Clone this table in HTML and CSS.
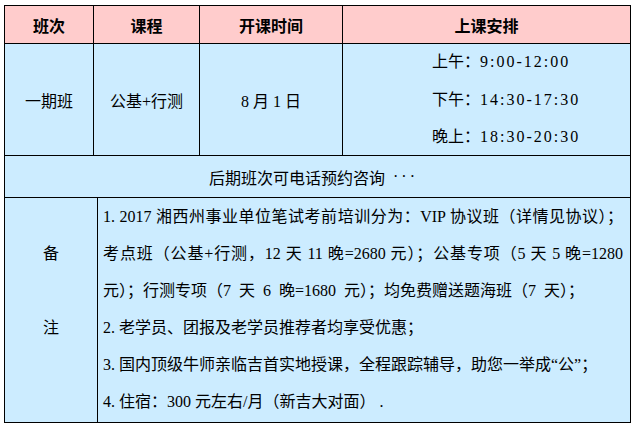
FILE: index.html
```html
<!DOCTYPE html>
<html lang="zh-CN">
<head>
<meta charset="utf-8">
<title>班次安排</title>
<link rel="stylesheet" href="styles.css">
</head>
<body>
<div class="sheet">
  <div class="grid4 head">
    <div class="cell c1">班次</div>
    <div class="cell c2">课程</div>
    <div class="cell c3">开课时间</div>
    <div class="cell c4">上课安排</div>
  </div>
  <div class="grid4 body-row">
    <div class="cell c1">一期班</div>
    <div class="cell c2">公基+行测</div>
    <div class="cell c3">8 月 1 日</div>
    <div class="cell c4 sched">
      <div>上午：<span class="time">9:00-12:00</span></div>
      <div>下午：<span class="time">14:30-17:30</span></div>
      <div>晚上：<span class="time">18:30-20:30</span></div>
    </div>
  </div>
  <div class="notice">后期班次可电话预约咨询<span class="dots">···</span></div>
  <div class="remarks">
    <div class="rcell rlabel">
      <div>&nbsp;</div>
      <div>备</div>
      <div>&nbsp;</div>
      <div>注</div>
    </div>
    <div class="rcell rtext">
      <div class="just">1. 2017 湘西州事业单位笔试考前培训分为：VIP 协议班（详情见协议）；</div>
      <div class="just">考点班（公基+行测，12 天 11 晚=2680 元）；公基专项（5 天 5 晚=1280</div>
      <div class="wide">元）；行测专项（7 天 6 晚=1680 元）；均免费赠送题海班（7 天）；</div>
      <div>2. 老学员、团报及老学员推荐者均享受优惠；</div>
      <div>3. 国内顶级牛师亲临吉首实地授课，全程跟踪辅导，助您一举成“公”；</div>
      <div>4. 住宿：300 元左右/月（新吉大对面）<span class="stop">.</span></div>
    </div>
  </div>
</div>
</body>
</html>
```
FILE: styles.css
```css
html, body {
  margin: 0;
  padding: 0;
  background: #ffffff;
}
body {
  padding: 5px 0 0 4px;
  font-family: "Liberation Serif", "Noto Sans CJK SC", serif;
  font-size: 16px;
  color: #000;
}
.sheet {
  width: 627px;
  box-sizing: border-box;
  border-left: 1px solid #000;
  border-top: 1px solid #000;
}
.grid4 {
  display: grid;
  grid-template-columns: 89px 106px 143px 288px;
}
.cell {
  box-sizing: border-box;
  border-right: 1px solid #000;
  border-bottom: 1px solid #000;
  display: flex;
  align-items: center;
  justify-content: center;
}
.head .cell {
  height: 38px;
  background: #ffcccc;
  font-weight: bold;
}
.body-row .cell {
  height: 112px;
  background: #ccecff;
}
.body-row .sched {
  flex-direction: column;
  align-items: flex-start;
  justify-content: center;
  padding-left: 89px;
  line-height: 37.5px;
}
.time {
  letter-spacing: 2px;
}
.notice {
  box-sizing: border-box;
  height: 42px;
  background: #ccecff;
  border-right: 1px solid #000;
  border-bottom: 1px solid #000;
  display: flex;
  align-items: center;
  justify-content: center;
  padding-right: 8px;
}
.dots {
  letter-spacing: 3px;
  margin-left: 8px;
  vertical-align: -1px;
}
.remarks {
  display: grid;
  grid-template-columns: 93px 533px;
}
.rcell {
  box-sizing: border-box;
  height: 225px;
  background: #ccecff;
  border-right: 1px solid #000;
  border-bottom: 1px solid #000;
  line-height: 37px;
}
.rlabel {
  text-align: center;
}
.rtext {
  padding-left: 5px;
  padding-right: 7px;
  white-space: nowrap;
}
.just {
  text-align: justify;
  text-align-last: justify;
}
.wide {
  word-spacing: 4px;
}
.stop {
  margin-left: 4px;
}
```
